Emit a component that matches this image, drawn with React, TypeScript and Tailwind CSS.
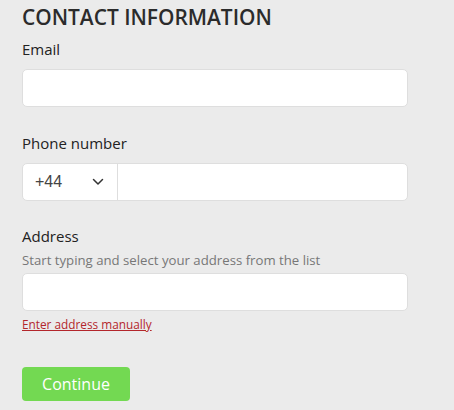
import React, { useState } from 'react';

export default function App() {
  const [email, setEmail] = useState('');
  const [phone, setPhone] = useState('');
  const [address, setAddress] = useState('');

  return (
    <div className="min-h-[410px] w-full bg-[#ebebeb] text-[#222] font-['Open_Sans',sans-serif]">
      <div className="pl-[22px] pt-[3px] w-[408px]">
        <h2 className="text-[20.9px] font-semibold leading-[28px] text-[#2b2b2b]">
          CONTACT INFORMATION
        </h2>

        {/* Email */}
        <label htmlFor="email" className="block mt-[8px] text-[15px] leading-[20px] text-[#222]">
          Email
        </label>
        <input
          id="email"
          type="email"
          value={email}
          onChange={(e) => setEmail(e.target.value)}
          className="mt-[10px] block w-[386px] h-[38px] rounded-[5px] border border-[#dedede] bg-white px-3 text-[15px] outline-none"
        />

        {/* Phone */}
        <label htmlFor="phone" className="block mt-[26px] text-[15px] leading-[20px]">
          Phone number
        </label>
        <div className="mt-[10px] flex w-[386px] h-[38px] rounded-[5px] border border-[#dedede] bg-white overflow-hidden">
          <div className="flex items-center w-[95px] border-r border-[#dedede] pl-[12px]">
            <span className="text-[16px] text-[#444] font-['Liberation_Sans',sans-serif]">+44</span>
            <svg className="ml-[30px]" width="12" height="8" viewBox="0 0 12 8" fill="none">
              <path d="M1.5 1.5l4.5 4.5 4.5-4.5" stroke="#333" strokeWidth="1.5" strokeLinecap="round" strokeLinejoin="round" />
            </svg>
          </div>
          <input
            id="phone"
            type="tel"
            value={phone}
            onChange={(e) => setPhone(e.target.value)}
            className="flex-1 px-3 text-[15px] outline-none"
          />
        </div>

        {/* Address */}
        <label htmlFor="address" className="block mt-[25px] text-[15px] leading-[20px]">
          Address
        </label>
        <p className="mt-[6px] text-[13.2px] leading-[17px] text-[#777]">
          Start typing and select your address from the list
        </p>
        <input
          id="address"
          type="text"
          value={address}
          onChange={(e) => setAddress(e.target.value)}
          className="mt-[4px] block w-[386px] h-[38px] rounded-[5px] border border-[#dedede] bg-white px-3 text-[15px] outline-none"
        />
        <a href="#" className="inline-block mt-[4px] text-[11.8px] leading-[16px] text-[#b3262b] underline">
          Enter address manually
        </a>

        <div className="mt-[32px]">
          <button
            type="button"
            className="w-[108px] h-[34px] rounded-[4px] bg-[#73d952] text-white text-[16px]"
          >
            Continue
          </button>
        </div>
      </div>
    </div>
  );
}
